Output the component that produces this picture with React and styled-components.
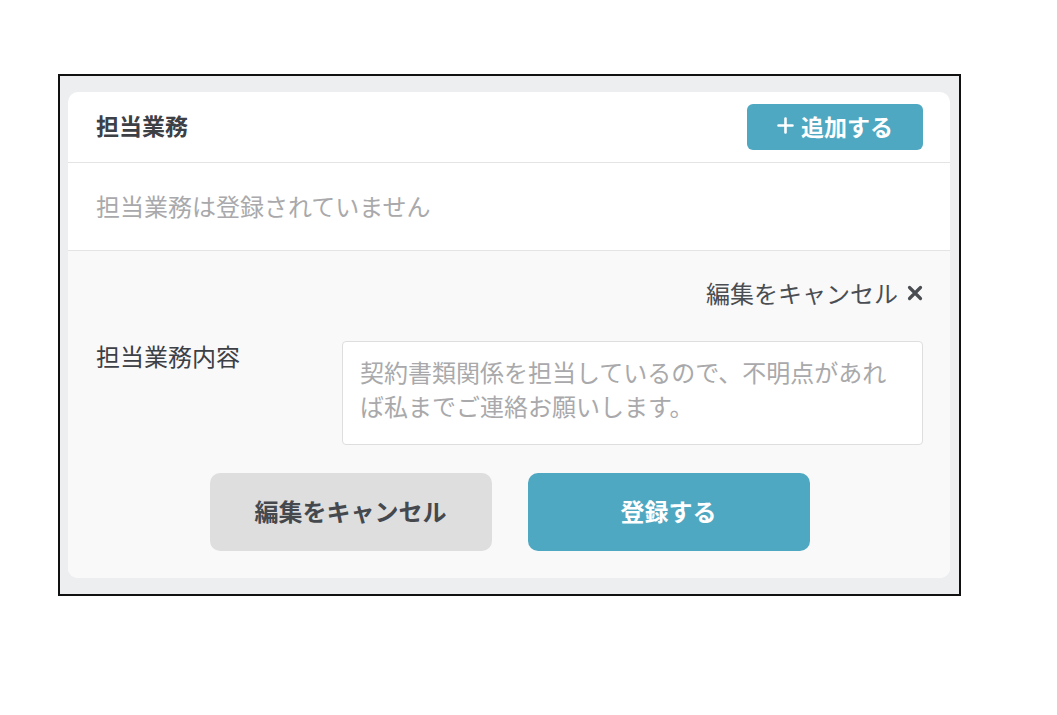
import React, { useState } from 'react';
import styled, { createGlobalStyle } from 'styled-components';

const GlobalStyle = createGlobalStyle`
  body {
    margin: 0;
    background: #ffffff;
    font-family: "Noto Sans CJK JP", "Noto Sans", sans-serif;
  }
`;

const Page = styled.div`
  padding: 74px 0 0 58px;
`;

const Frame = styled.div`
  width: 903px;
  box-sizing: border-box;
  border: 2px solid #111;
  background: #eceef0;
  padding: 16px 9px 16px 8px;
`;

const Card = styled.div`
  background: #fff;
  border-radius: 10px;
  overflow: hidden;
`;

const Header = styled.div`
  height: 71px;
  display: flex;
  align-items: center;
  justify-content: space-between;
  padding: 0 27px 0 28px;
  border-bottom: 1px solid #e4e4e4;
  box-sizing: border-box;
`;

const Title = styled.h2`
  margin: 0 0 4px;
  font-size: 23px;
  font-weight: 700;
  color: #3d4045;
`;

const AddButton = styled.button`
  width: 176px;
  height: 46px;
  border: none;
  border-radius: 6px;
  background: #4fa8c1;
  color: #fff;
  font-family: inherit;
  font-size: 23px;
  font-weight: 700;
  display: flex;
  align-items: center;
  justify-content: center;
  gap: 7px;
  padding: 0 0 3px;
  cursor: pointer;
`;

const EmptyRow = styled.div`
  height: 88px;
  display: flex;
  align-items: center;
  padding: 0 28px 3px;
  font-size: 24px;
  color: #a9a9ab;
  border-bottom: 1px solid #e4e4e4;
  box-sizing: border-box;
`;

const EditSection = styled.div`
  background: #f9f9fa;
  padding: 27px 27px 27px 28px;
`;

const CancelLink = styled.div`
  display: flex;
  justify-content: flex-end;
  align-items: center;
  gap: 9px;
  font-size: 24px;
  line-height: 30px;
  color: #4a4d52;
  cursor: pointer;
`;

const FormRow = styled.div`
  display: grid;
  grid-template-columns: 246px 1fr;
  margin-top: 33px;
`;

const Label = styled.label`
  font-size: 24px;
  line-height: 30px;
  color: #3d4045;
`;

const TextArea = styled.textarea`
  height: 104px;
  box-sizing: border-box;
  border: 1px solid #dedede;
  border-radius: 4px;
  background: #fff;
  padding: 13px 17px;
  font-family: inherit;
  font-size: 24px;
  line-height: 34px;
  color: #333;
  resize: none;
  outline: none;

  &::placeholder {
    color: #a9a9ab;
  }
`;

const Actions = styled.div`
  display: flex;
  justify-content: center;
  gap: 36px;
  margin-top: 28px;
`;

const ActionButton = styled.button`
  width: 282px;
  height: 78px;
  border: none;
  border-radius: 10px;
  padding: 0 0 4px;
  background: ${(p) => (p.$primary ? '#4fa8c1' : '#dedede')};
  color: ${(p) => (p.$primary ? '#fff' : '#45484d')};
  font-family: inherit;
  font-size: 24px;
  font-weight: 700;
  cursor: pointer;
`;

const CloseIcon = () => (
  <svg width="16" height="16" viewBox="0 0 16 16">
    <path d="M2.5 2.5 L13.5 13.5 M13.5 2.5 L2.5 13.5" stroke="#4a4d52" strokeWidth="3.2" strokeLinecap="round" />
  </svg>
);

const PlusIcon = () => (
  <svg width="17" height="17" viewBox="0 0 17 17">
    <path d="M8.5 1.5 V15.5 M1.5 8.5 H15.5" stroke="#fff" strokeWidth="2.6" strokeLinecap="round" />
  </svg>
);

export default function App() {
  const [text, setText] = useState('');

  return (
    <Page>
      <GlobalStyle />
      <Frame>
        <Card>
          <Header>
            <Title>担当業務</Title>
            <AddButton>
              <PlusIcon />
              追加する
            </AddButton>
          </Header>
          <EmptyRow>担当業務は登録されていません</EmptyRow>
          <EditSection>
            <CancelLink>
              編集をキャンセル
              <CloseIcon />
            </CancelLink>
            <FormRow>
              <Label>担当業務内容</Label>
              <TextArea
                value={text}
                onChange={(e) => setText(e.target.value)}
                placeholder="契約書類関係を担当しているので、不明点があれば私までご連絡お願いします。"
              />
            </FormRow>
            <Actions>
              <ActionButton>編集をキャンセル</ActionButton>
              <ActionButton $primary>登録する</ActionButton>
            </Actions>
          </EditSection>
        </Card>
      </Frame>
    </Page>
  );
}
